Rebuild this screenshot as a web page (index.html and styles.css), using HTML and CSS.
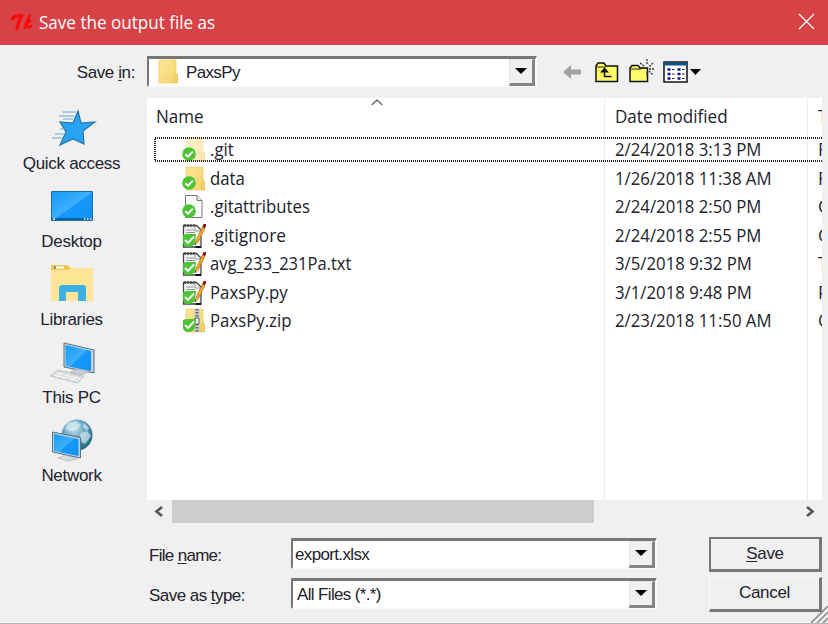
FILE: index.html
```html
<!DOCTYPE html>
<html lang="en">
<head>
<meta charset="utf-8">
<title>Save the output file as</title>
<link rel="stylesheet" href="styles.css">
</head>
<body>
<svg class="defs" width="0" height="0" aria-hidden="true">
  <defs>
    <linearGradient id="blue" x1="0" y1="0" x2="1" y2="1"><stop offset="0" stop-color="#169af5"/><stop offset=".5" stop-color="#3eafff"/><stop offset=".52" stop-color="#1699fa"/><stop offset="1" stop-color="#0d92f4"/></linearGradient>
    <linearGradient id="gold" x1="0" y1="0" x2="1" y2="1"><stop offset="0" stop-color="#fbe697"/><stop offset="1" stop-color="#f5d36a"/></linearGradient>
    <radialGradient id="globe" cx=".4" cy=".3" r=".7"><stop offset="0" stop-color="#c5e3ee"/><stop offset=".55" stop-color="#5e9fba"/><stop offset="1" stop-color="#236784"/></radialGradient>
    <symbol id="check" viewBox="0 0 14 14"><circle cx="7" cy="7" r="6.8" fill="#4cc436"/><path d="M3.300 7.200l2.700 2.500 4.800-5" fill="none" stroke="#fff" stroke-width="1.900"/></symbol>
    <symbol id="folder" viewBox="0 0 24 26"><path d="M4 1h17v13l1.500 2v8H4z" fill="url(#gold)" stroke="#edc75c" stroke-width=".7"/><path d="M19.500 23.500v-7l1.500-2 1.500 2v7z" fill="#f7d974" stroke="#dfb548" stroke-width=".7"/></symbol>
    <symbol id="note" viewBox="0 0 24 26">
      <path d="M1.500 2.500h13l4.500 4.500v17h-17.500z" fill="#f4f6f6" stroke="#444" stroke-width="1.300"/>
      <path d="M3 1v3M6 1v3M9 1v3M12 1v3" stroke="#444" stroke-width="1.300"/><path d="M4 7h8M4 9.500h9M13 3v5h5" stroke="#8f9897" fill="none"/>
      <path d="M13.500 24h5.500" stroke="#111" stroke-width="2"/>
      <path d="M20.500 3.500l-6.500 14-1 4 3.500-3 6.500-13z" fill="#f2a52c" stroke="#a96e1d" stroke-width=".6"/><path d="M20.500 3.500l1-2.500h2.500v2.500l-1.500 2z" fill="#8d1820"/><path d="M13 20l-.5 2 2-1z" fill="#222"/>
    </symbol>
    <symbol id="widecheck" viewBox="0 0 15 14"><path d="M1 2Q4 .5 8 1h6l-1 9q-2 4-7 4-4 0-5-4z" fill="#4cc436"/><path d="M3 7l3 3 6-6.500" fill="none" stroke="#fff" stroke-width="1.900"/></symbol>
  </defs>
</svg>
<div class="dialog">
  <header class="titlebar">
    <svg class="tk" width="24" height="20" viewBox="0 0 24 20"><g fill="none" stroke="#fa0909" stroke-linecap="round" stroke-linejoin="round"><path d="M2.500 6c1-3 4-3 9.500-3.500-3 4-4 8-5 13" stroke-width="3.300"/><path d="M20 2.500c-3 4-4 8-5 12.500M15.500 11c3-1 5-3 4.500-3.500-1-1-3 2-4 3.500l3 3.500 2-1.500" stroke-width="2.500"/></g></svg>
    <h1><span class="fit title">Save the output file as</span></h1>
    <svg class="close" width="17" height="17" viewBox="0 0 17 17"><path d="M1 1l15 15M16 1L1 16" stroke="#fff" stroke-width="1.200"/></svg>
  </header>

  <div class="toolbar">
    <label class="savein"><span>Save <u>i</u>n:</span></label>
    <div class="combo location">
      <svg width="24" height="26"><use href="#folder"/></svg><span class="grow">PaxsPy</span><b class="drop"></b>
    </div>
    <div class="tools">
      <svg width="19" height="18" viewBox="0 0 19 18"><path d="M0 9l8-7v4.500h10v5H8V16z" fill="#a2a2a2"/></svg>
      <svg class="up" width="24" height="21" viewBox="0 0 24 21"><path d="M1 19.500V4l2-3h6l2 3h11.500v15.500z" fill="#fdfb67" stroke="#111" stroke-width="1.500"/><path d="M2 5h9" stroke="#222"/><path d="M16.500 14.500H9.500V8" fill="none" stroke="#111" stroke-width="1.500"/><path d="M5 10.500l4.500-5 4.500 5z" fill="#111"/></svg>
      <svg class="newf" width="25" height="24" viewBox="0 0 25 24"><path d="M1 22.500V9l2-2.500h6L11 9h7.500v13.500z" fill="#fdfb67" stroke="#111" stroke-width="1.500"/><path d="M2 10h10" stroke="#222"/><path d="M18 0v5M18 13v4M11 4l4 3M24 4l-4 4M20 10h5M20 12l4 4M12 9h4" stroke="#333" stroke-width="1.300" stroke-dasharray="2 1"/></svg>
      <svg class="views" width="39" height="22" viewBox="0 0 39 22"><path d="M1 1h23v20H1z" fill="#fff" stroke="#111" stroke-width="1.500"/><path d="M1 1.500h23v3H1z" fill="#07558b"/><path d="M4.500 8.500h3M4.500 13h3M4.500 17.500h3M14.500 8.500h3M14.500 13h3M14.500 17.500h3" stroke="#15128f" stroke-width="2.500"/><path d="M9 8.500h2.500M9 13h2.500M9 17.500h2.500M19 8.500h2.500M19 13h2.500M19 17.500h2.500" stroke="#223" stroke-width="1.200"/><path d="M27 8h11l-5.500 6z" fill="#050505"/></svg>
    </div>
  </div>

  <main class="main">
    <nav class="places">
      <a><svg width="50" height="39" viewBox="0 0 50 39"><path d="M31 2l3 12 14-1-12 9 1 13-11-5-13 6 6-13-6-10 13 1z" fill="#27a3f3" stroke="#2874a8" stroke-width="1.200"/><path d="M15 3h14M12 7h15M16 10h10M8 25h9M5 29h10M13 20h5" stroke="#599fca" stroke-width=".9"/></svg><span>Quick access</span></a>
      <a><svg width="50" height="39" viewBox="0 0 50 39"><path d="M4.500 4.500h41v29h-41z" fill="url(#blue)" stroke="#206da6"/><path d="M5 32h40" stroke="#0764a8" stroke-width="2"/><path d="M6 32h2M37 32h1.500M40 32h1.500M43 32h1.500" stroke="#fff" stroke-width="1.500"/></svg><span>Desktop</span></a>
      <a><svg width="50" height="39" viewBox="0 0 50 39"><path d="M4 1h17l3 2h22v33H4z" fill="#ffe596"/><path d="M4 0h16l4 3-3 2H4z" fill="#f3c650"/><path d="M8 2.500h9" stroke="#fff" stroke-width="2"/><path d="M7 2.500h2" stroke="#46819a" stroke-width="2"/><path d="M12 36V23q0-3 3-3h21q3 0 3 3v13h-8v-9H19v9z" fill="#3bb0e5"/></svg><span>Libraries</span></a>
      <a><svg width="50" height="43" viewBox="0 0 50 43"><path d="M17 2l30 7v23l-30-6z" fill="#bed1dc" stroke="#5b7382"/><path d="M18.500 4L44 10v20l-25.500-5z" fill="url(#blue)"/><path d="M31 28l-7 2v2l9 2 9-3-6-2z" fill="#c7cdd0" stroke="#a3adb2" stroke-width=".6"/><path d="M11 29l26 6-6 7-28-7z" fill="#d7dadb" stroke="#a6acaf" stroke-width=".6"/><path d="M9 32l25 6M7 34l25 6M16 31l-7 5M23 33l-7 5M30 35l-6 5" stroke="#fff" stroke-width=".8"/></svg><span>This PC</span></a>
      <a><svg width="50" height="43" viewBox="0 0 50 43"><circle cx="30" cy="16" r="15.500" fill="url(#globe)"/><path d="M21 4l8-2 5 4-4 5-7 1-5-2zM37 4l5 5-2 3-4-4zM34 14l6-2 4 5-6 8-6-4z" fill="#e1f0f3" opacity=".65"/><path d="M5.500 13l28 5.500V39l-28-6z" fill="#bed1dc" stroke="#4d7180"/><path d="M7 15l24.500 5v17L7 32z" fill="url(#blue)"/><path d="M18 36l-7 3 10 3 9-2z" fill="#d8dddf" stroke="#a1a9ae" stroke-width=".6"/></svg><span>Network</span></a>
    </nav>

    <section class="browser">
      <div class="files">
        <svg class="sort" width="12" height="7" viewBox="0 0 12 7"><path d="M.7 6L6 1l5.300 5" fill="none" stroke="#666" stroke-width="1.300"/></svg>
        <div class="row head"><span class="name"><i class="fit">Name</i></span><span class="date"><i class="fit">Date modified</i></span><span class="type">T</span></div>
        <div class="row"><span class="name"><svg class="fi" width="24" height="26"><use class="faded" href="#folder"/><use href="#check" y="10" width="14" height="14"/></svg><i class="fit">.git</i></span><span class="date"><i class="fit">2/24/2018 3:13 PM</i></span><span class="type">F</span><svg class="focus" width="680" height="25"><rect x="1" y="1" width="700" height="23" fill="none" stroke="#222" stroke-width="2" stroke-dasharray="1 1"/></svg></div>
        <div class="row"><span class="name"><svg class="fi" width="24" height="26"><use href="#folder"/><use href="#check" y="10" width="14" height="14"/></svg><i class="fit">data</i></span><span class="date"><i class="fit">1/26/2018 11:38 AM</i></span><span class="type">F</span></div>
        <div class="row"><span class="name"><svg class="fi" width="24" height="26"><path d="M3.500 1.500H15l5 5v17H3.500z" fill="#fcfdfd" stroke="#777"/><path d="M15 1.500v5h5" fill="#e6eaeb" stroke="#777"/><use href="#check" y="10" width="14" height="14"/></svg><i class="fit">.gitattributes</i></span><span class="date"><i class="fit">2/24/2018 2:50 PM</i></span><span class="type">G</span></div>
        <div class="row"><span class="name"><svg class="fi" width="24" height="26"><use href="#note"/><use href="#widecheck" y="10" width="15" height="14"/></svg><i class="fit wide">.gitignore</i></span><span class="date"><i class="fit">2/24/2018 2:55 PM</i></span><span class="type">G</span></div>
        <div class="row"><span class="name"><svg class="fi" width="24" height="26"><use href="#note"/><use href="#widecheck" y="10" width="15" height="14"/></svg><i class="fit slim">avg_233_231Pa.txt</i></span><span class="date"><i class="fit">3/5/2018 9:32 PM</i></span><span class="type">T</span></div>
        <div class="row"><span class="name"><svg class="fi" width="24" height="26"><use href="#note"/><use href="#widecheck" y="10" width="15" height="14"/></svg><i class="fit">PaxsPy.py</i></span><span class="date"><i class="fit">3/1/2018 9:48 PM</i></span><span class="type">P</span></div>
        <div class="row"><span class="name"><svg class="fi" width="24" height="26"><use href="#folder"/><path d="M12 1h6v23h-6z" fill="#d3d1c9"/><path d="M15 1v23" stroke="#666" stroke-width="3" stroke-dasharray="1.500 1.500"/><path d="M13 10h4v6h-4z" fill="#eee" stroke="#666"/><use href="#widecheck" y="10" width="15" height="14"/></svg><i class="fit">PaxsPy.zip</i></span><span class="date"><i class="fit">2/23/2018 11:50 AM</i></span><span class="type">C</span></div>
      </div>
      <div class="scroll">
        <svg width="25" height="24" viewBox="0 0 25 24"><path d="M15 7L9.500 11.500l5.500 4.500" fill="none" stroke="#555" stroke-width="2.600"/></svg><div class="thumb"></div><svg width="25" height="24" viewBox="0 0 25 24"><path d="M10 7l5.500 4.500L10 16" fill="none" stroke="#555" stroke-width="2.600"/></svg>
      </div>
      <div class="fields">
        <label class="fname">File <u>n</u>ame:</label><div class="combo"><span class="grow">export.xlsx</span><b class="drop"></b></div><button class="default"><u>S</u>ave</button>
        <label>Save as <u>t</u>ype:</label><div class="combo kind"><span class="grow">All Files (*.*)</span><b class="drop"></b></div><button>Cancel</button>
      </div>
    </section>
  </main>
  <svg class="grip" width="17" height="17" viewBox="0 0 17 17"><path d="M0 17L17 0M6 17L17 6M12 17l5-5" stroke="#8d8d8d" stroke-width="1.600"/></svg>
</div>
</body>
</html>
```
FILE: styles.css
```css
* { box-sizing: border-box; }
body { margin: 0; background: #f0f0f0; color: #22222c; font: 17px/20px "Liberation Sans", sans-serif; letter-spacing: -.3px; }
svg { display: block; flex: none; }
.defs { position: absolute; }
.dialog { position: relative; width: 828px; height: 624px; overflow: hidden; border-bottom: 1px solid #b5b5b5; background: #f0f0f0; }
.titlebar { display: flex; align-items: center; height: 45px; padding: 0 13px 0 10px; background: #d64245; color: #fff; }
.tk { margin-right: 5px; }
h1 { flex: 1; margin: 0 0 2px; font: 400 18px/24px "Open Sans", sans-serif; letter-spacing: 0; }
.fit { display: inline-block; font-style: normal; transform: scaleX(.97); transform-origin: left; }
.title { transform: scaleX(.948); }
.wide { transform: scaleX(1); }
.slim { transform: scaleX(.955); }
.close { margin-bottom: 3px; }
u { text-decoration-thickness: 1px; text-underline-offset: 2px; }
.toolbar { display: flex; height: 53px; padding-top: 11px; }
.savein { width: 147px; padding: 7px 12px 0 0; text-align: right; letter-spacing: -.4px; }
.combo { display: flex; align-items: center; height: 31px; padding-left: 3px; background: #fff; border: 2px solid; border-color: #777 #fafafa #fafafa #777; border-top-width: 3px; }
.grow { flex: 1; padding-top: 2px; white-space: nowrap; letter-spacing: -.65px; }
.drop { display: flex; align-items: center; justify-content: center; width: 26px; height: 27px; background: #f0f0f0; border: 1px solid #e2e2e2; border-right: 3px solid #858585; border-bottom: 3px solid #858585; }
.drop::before { content: ""; border: 6px solid transparent; border-top-color: #000; border-bottom: 0; }
.location { width: 390px; padding-left: 6px; }
.location svg { margin-right: 7px; }
.location .grow { padding-top: 1px; }
.tools { display: flex; align-items: center; height: 32px; margin-left: 26px; }
.up { margin-left: 13px; }
.newf { margin: -2px 0 0 10px; }
.views { margin-left: 9px; }
.main { display: flex; height: 525px; }
.places { width: 147px; padding: 9px 4px 0 0; }
.places a { display: flex; flex-direction: column; align-items: center; height: 78px; }
.places svg { height: 43px; margin-bottom: 4px; }
.browser { width: 675px; }
.files { position: relative; height: 402px; overflow: hidden; background: linear-gradient(#e3eef8, #e3eef8) 457px 0 / 1px 100% no-repeat, linear-gradient(#e3eef8, #e3eef8) 660px 0 / 1px 100% no-repeat, #fff; font: 17.3px/24px "Open Sans", sans-serif; letter-spacing: 0; }
.sort { position: absolute; left: 224px; top: 1px; }
.row { position: relative; display: grid; grid-template-columns: 459px 203px 1fr; align-items: center; height: 28.5px; white-space: nowrap; }
.head { height: 38px; }
.name { display: flex; align-items: center; padding-left: 35px; }
.head .name { padding-left: 9px; }
.head .fit { transform: scaleX(.985); }
.fi { margin-right: 4px; }
.faded { opacity: .5; }
.date { padding-left: 9px; }
.type { padding-left: 9px; min-width: 0; overflow: hidden; }
.focus { position: absolute; left: 7px; top: 1px; }
.scroll { display: flex; height: 23px; }
.thumb { width: 422px; margin-right: 203px; background: #cdcdcd; }
.fields { display: grid; grid-template-columns: 143px 367px 165px; grid-template-rows: 35px 35px; row-gap: 5px; padding-top: 14px; }
.fields label { padding: 9px 0 0 2px; letter-spacing: -.55px; }
.fields .fname { letter-spacing: -.7px; }
.fields .combo { height: 31px; margin: 1px 0 0 1px; padding-left: 2px; }
.fields .kind { padding-left: 4px; }
button { width: 113px; height: 35px; margin-left: 52px; padding: 0 0 1px; font: inherit; letter-spacing: inherit; color: inherit; background: #f0f0f0; border: 1px solid #fafafa; border-right: 3px solid #777; border-bottom: 3px solid #777; }
.default { border-top: 2px solid #777; border-left: 2px solid #777; }
.grip { position: absolute; right: 0; bottom: 0; }
```
